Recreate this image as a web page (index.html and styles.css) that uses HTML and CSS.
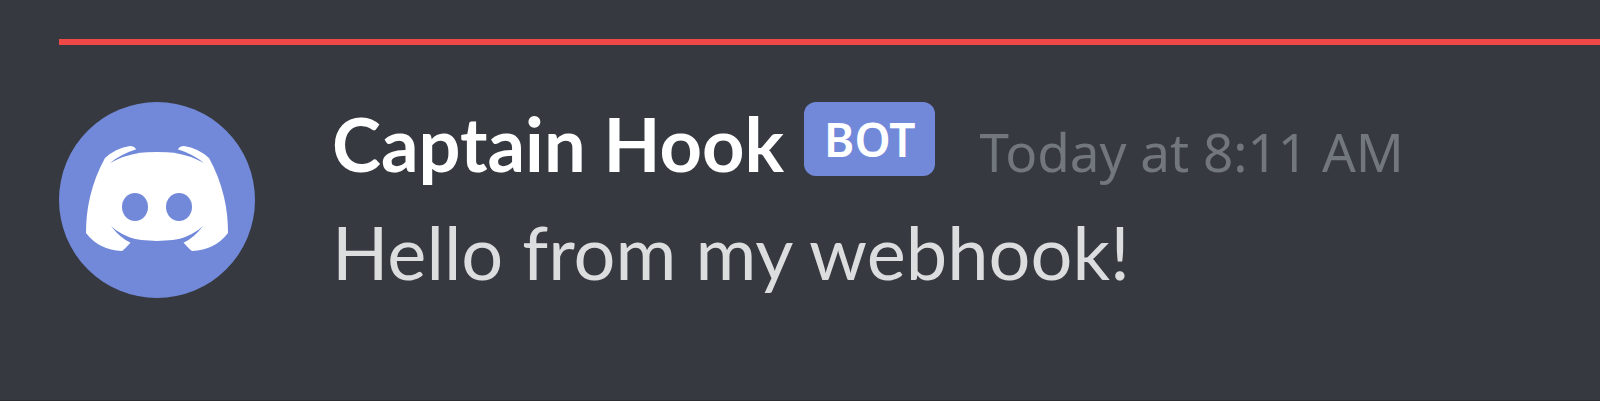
FILE: index.html
```html
<!DOCTYPE html>
<html lang="en">
<head>
<meta charset="utf-8">
<meta name="viewport" content="width=device-width, initial-scale=1">
<title>Captain Hook</title>
<link rel="stylesheet" href="styles.css">
</head>
<body>
<main class="chat">
  <hr class="divider">
  <article class="message">
    <svg class="avatar" viewBox="0 0 196 196" role="img" aria-label="Captain Hook avatar">
      <circle class="avatar-disc" cx="98" cy="98" r="98"/>
      <path class="avatar-face" d="M98 50 Q88 50 78 51 L77 47 Q75 44 71 44 Q57 46 46 56 Q36 74 31 95 Q27 112 27 131 Q40 148 63 149 Q66 147 72 140 L70 136 Q84 139 98 139 Q112 139 126 136 L124 140 Q130 147 133 149 Q156 148 169 131 Q169 112 165 95 Q160 74 150 56 Q139 46 125 44 Q121 44 119 47 L118 51 Q108 50 98 50 Z"/>
      <path class="avatar-disc" d="M51 61 Q62 52 78 47 L80 51 Q66 53 51 61 Z M145 61 Q134 52 118 47 L116 51 Q130 53 145 61 Z M52 124 Q60 132 78 138 L72 141 Q61 136 52 124 Z M144 124 Q136 132 118 138 L124 141 Q135 136 144 124 Z"/>
      <ellipse class="avatar-disc" cx="76" cy="105" rx="13" ry="14"/>
      <ellipse class="avatar-disc" cx="120" cy="105" rx="13" ry="14"/>
    </svg>
    <div class="body">
      <header class="meta">
        <span class="author">Captain Hook</span>
        <span class="badge">BOT</span>
        <time class="time">Today at 8:11 AM</time>
      </header>
      <p class="text">Hello from my webhook!</p>
    </div>
  </article>
</main>
</body>
</html>
```
FILE: styles.css
```css
* { box-sizing: border-box; }
body {
  margin: 0;
  min-height: 100vh;
  display: flex;
  background: #36393f;
  font-family: "Noto Sans", sans-serif;
  color: #dcddde;
}
.chat {
  flex: 1;
  padding: 39px 0 0 59px;
  border-bottom: 1px solid #2b2d31;
}
.divider {
  height: 6px;
  margin: 0 0 57px;
  border: 0;
  background: #f04747;
}
.message {
  display: flex;
  align-items: flex-start;
  gap: 77px;
}
.avatar { width: 196px; height: 196px; flex: none; }
.avatar-disc { fill: #7289da; }
.avatar-face { fill: #fff; }
.body { flex: 1; min-width: 0; white-space: nowrap; }
.meta {
  display: flex;
  align-items: baseline;
  line-height: 84px;
}
.author {
  color: #fff;
  font-family: Lato, sans-serif;
  font-size: 74px;
  font-weight: 700;
}
.badge {
  align-self: flex-start;
  margin-left: 20px;
  padding: 0 20px;
  border-radius: 12px;
  background: #7289da;
  color: #fff;
  font-size: 46px;
  font-weight: 600;
  line-height: 74px;
}
.time {
  margin-left: 44px;
  color: #72767d;
  font-size: 53px;
}
.text {
  margin: 4px 0 0;
  font-family: Lato, sans-serif;
  font-size: 74px;
  line-height: 108px;
}
```
